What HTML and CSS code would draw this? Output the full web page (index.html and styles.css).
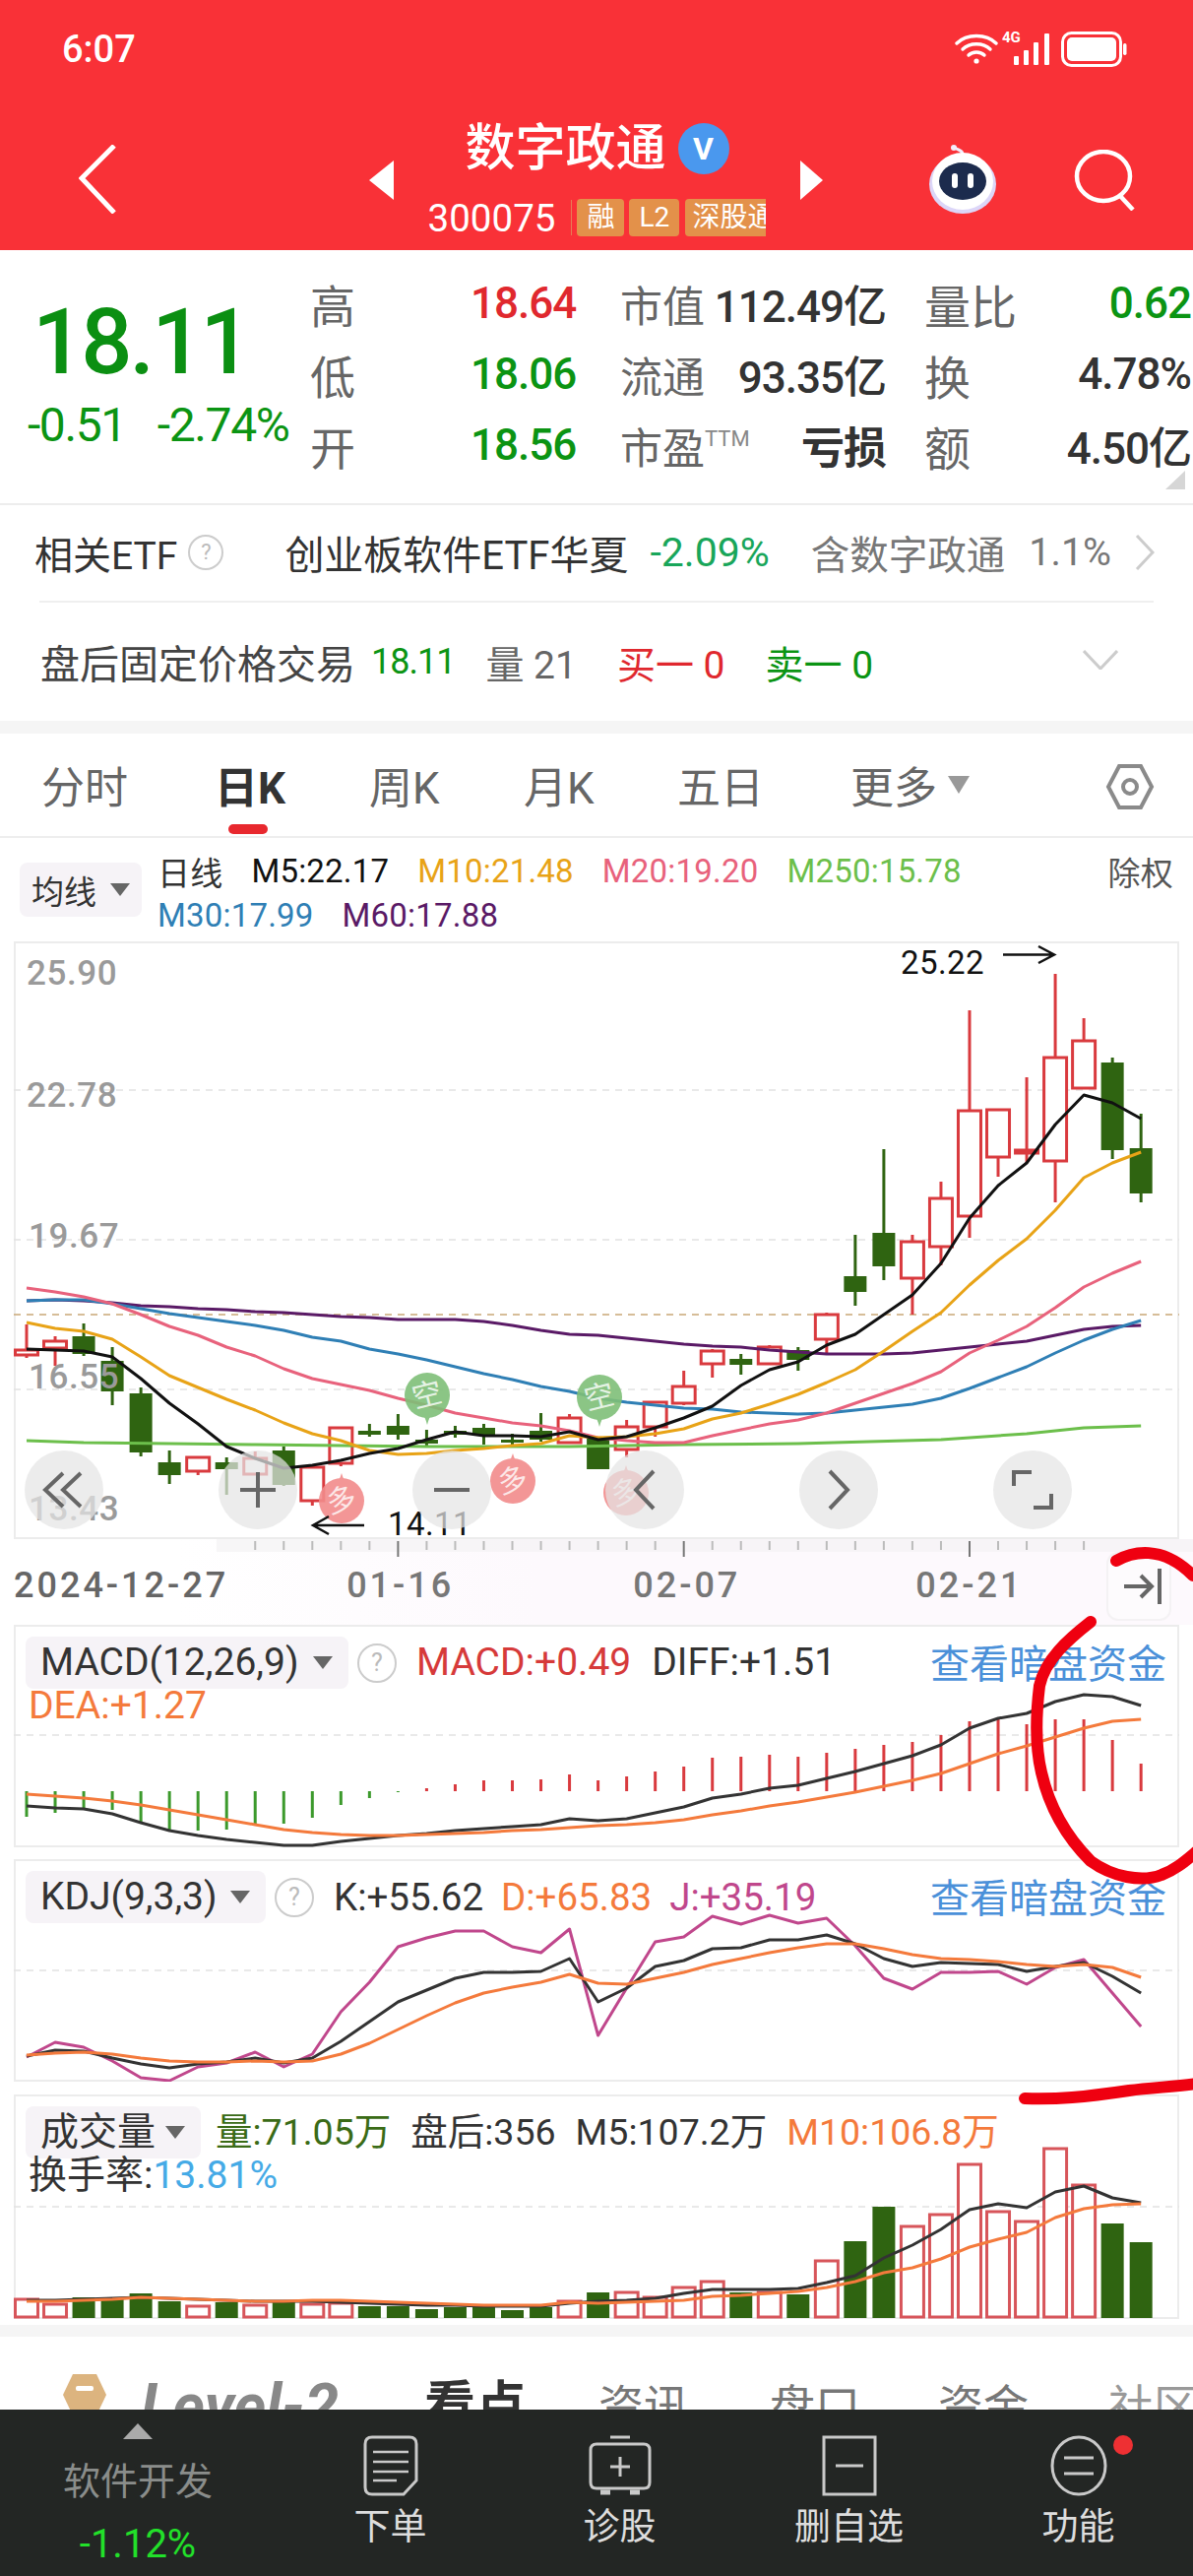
FILE: index.html
```html
<!DOCTYPE html>
<html lang="zh-CN">
<head>
  <meta charset="UTF-8" />
  <meta name="viewport" content="width=device-width, initial-scale=1.0" />
  <title>数字政通 300075</title>
  <link rel="stylesheet" href="styles.css">
</head>
<body>
  <div class="page">
    <!-- 顶部 -->
    <header class="top">
      <div class="status">
        <span class="time">6:07</span>
        <div class="status-icons">
          <svg width="44" height="34" viewBox="0 0 44 34" fill="none" stroke="#fff" stroke-width="3.4" stroke-linecap="round"><path d="M2 11C12 1 32 1 42 11"/><path d="M8 17C15 10 29 10 36 17"/><path d="M14 23C18 19 26 19 30 23"/><circle cx="22" cy="29" r="2.6" fill="#fff" stroke="none"/></svg>
          <div class="signal">
            <span class="net">4G</span>
            <svg width="38" height="34" viewBox="0 0 38 34" fill="#fff"><rect x="0" y="24" width="5" height="9" rx="1"/><rect x="10" y="18" width="5" height="15" rx="1"/><rect x="20" y="10" width="5" height="23" rx="1"/><rect x="31" y="1" width="5" height="32" rx="1"/></svg>
          </div>
          <svg width="68" height="36" viewBox="0 0 68 36"><rect x="1.5" y="1.5" width="59" height="33" rx="9" fill="none" stroke="#fff" stroke-width="3"/><rect x="6" y="6" width="50" height="24" rx="5" fill="#fff"/><rect x="63" y="12" width="3.5" height="12" rx="1.7" fill="#fff"/></svg>
        </div>
      </div>
      <div class="nav">
        <svg class="back" width="38" height="70" viewBox="0 0 38 70" fill="none" stroke="#fff" stroke-width="5"><path d="M36 1 3 34l33 35"/></svg>
        <svg class="tri tri-left" width="25" height="40" viewBox="0 0 25 40" fill="#fff"><path d="M25 0V40L0 20Z"/></svg>
        <div class="stock">
          <div class="stock-name">
            <span>数字政通</span>
            <i class="v-badge">V</i>
          </div>
          <div class="stock-sub">
            <span class="code">300075</span>
            <span class="sep"></span>
            <span class="tag">融</span>
            <span class="tag tag-l2">L2</span>
            <span class="tag tag-cut">深股通</span>
          </div>
        </div>
        <svg class="tri tri-right" width="23" height="40" viewBox="0 0 23 40" fill="#fff"><path d="M0 0V40L23 20Z"/></svg>
        <svg class="robot" width="73" height="70" viewBox="0 0 73 70">
          <path d="M37 10C37 4 30 6 29 2" fill="none" stroke="#f3eefc" stroke-width="3"/>
          <circle cx="28" cy="3" r="3" fill="#f3eefc"/>
          <ellipse cx="37" cy="40" rx="34" ry="30" fill="#dcd6f8"/>
          <ellipse cx="37" cy="37" rx="31" ry="29" fill="#fff"/>
          <ellipse cx="37" cy="37" rx="24" ry="19" fill="#1c2b4d"/>
          <rect x="26" y="29" width="6" height="15" rx="3" fill="#fff"/>
          <rect x="42" y="29" width="6" height="15" rx="3" fill="#fff"/>
        </svg>
        <svg class="search" width="62" height="62" viewBox="0 0 62 62" fill="none" stroke="#fff" stroke-width="4.5"><ellipse cx="30" cy="27" rx="27" ry="25"/><path d="M47 47 60 61"/></svg>
      </div>
    </header>

    <!-- 行情 -->
    <section class="quote">
      <div class="price-box">
        <div class="price">18.11</div>
        <div class="change"><span>-0.51</span><span>-2.74%</span></div>
      </div>
      <div class="quote-grid">
        <span class="lbl">高</span><span class="num red">18.64</span>
        <div class="cell"><span class="lbl">市值</span><span class="num">112.49亿</span></div>
        <div class="cell"><span class="lbl big">量比</span><span class="num green">0.62</span></div>
        <span class="lbl">低</span><span class="num green">18.06</span>
        <div class="cell"><span class="lbl">流通</span><span class="num">93.35亿</span></div>
        <div class="cell"><span class="lbl big">换</span><span class="num">4.78%</span></div>
        <span class="lbl">开</span><span class="num green">18.56</span>
        <div class="cell"><span class="lbl">市盈<sup class="ttm">TTM</sup></span><span class="num bold">亏损</span></div>
        <div class="cell"><span class="lbl big">额</span><span class="num">4.50亿</span></div>
      </div>
      <svg class="corner" width="20" height="19" viewBox="0 0 20 19"><path d="M20 0V19H0Z" fill="#d6d6d6"/></svg>
    </section>

    <section class="etf-row">
      <span class="etf-title">相关ETF</span>
      <i class="help help-sm">?</i>
      <span class="etf-name">创业板软件ETF华夏</span>
      <span class="etf-pct">-2.09%</span>
      <span class="etf-note">含数字政通</span>
      <span class="etf-note etf-share">1.1%</span>
      <svg class="etf-more" width="20" height="36" viewBox="0 0 20 36" fill="none" stroke="#ccc" stroke-width="3"><path d="M2 1 18 18 2 35"/></svg>
    </section>

    <section class="after-row">
      <span class="after-title">盘后固定价格交易</span>
      <span class="green after-price">18.11</span>
      <span class="after-vol">量 21</span>
      <span class="red after-buy">买一 0</span>
      <span class="green after-sell">卖一 0</span>
      <svg class="after-more" width="36" height="20" viewBox="0 0 36 20" fill="none" stroke="#ccc" stroke-width="3"><path d="M1 1 18 19 35 1"/></svg>
    </section>
    <div class="band"></div>

    <nav class="tabs">
      <span>分时</span>
      <span class="tab-on">日K</span>
      <span>周K</span>
      <span>月K</span>
      <span>五日</span>
      <span class="tab-more">更多<i class="caret caret-tab"></i></span>
      <svg class="tab-set" width="50" height="48" viewBox="0 0 50 48" fill="none" stroke="#8a8a8a" stroke-width="4"><path d="M14 3H36L47 24 36 45H14L3 24Z"/><circle cx="25" cy="24" r="7"/></svg>
    </nav>

    <!-- K线 -->
    <div class="ma-legend">
      <div class="chip chip-ma">均线<i class="caret"></i></div>
      <div class="ma-rows">
        <div class="ma-row">
          <span class="ma-day">日线</span>
          <span class="c-m5">M5:22.17</span>
          <span class="c-m10">M10:21.48</span>
          <span class="c-m20">M20:19.20</span>
          <span class="c-m250">M250:15.78</span>
          <span class="ma-right">除权</span>
        </div>
        <div class="ma-row">
          <span class="c-m30">M30:17.99</span>
          <span class="c-m60">M60:17.88</span>
        </div>
      </div>
    </div>

    <div class="chart chart-main">
      <svg id="kline" class="plot" width="1184" height="607" viewBox="14 956 1184 607"></svg>
      <div class="chart-nav">
        <span class="nav-btn"><svg width="46" height="46" viewBox="0 0 46 46" fill="none" stroke="#666" stroke-width="4"><path d="M22 6 4 23l18 17"/><path d="M40 6 22 23l18 17"/></svg></span>
        <span class="nav-btn"><svg width="38" height="38" viewBox="0 0 38 38" fill="none" stroke="#666" stroke-width="4"><path d="M19 1V37M1 19H37"/></svg></span>
        <span class="nav-btn"><svg width="38" height="38" viewBox="0 0 38 38" fill="none" stroke="#666" stroke-width="4"><path d="M1 19H37"/></svg></span>
        <span class="nav-btn"><svg width="24" height="42" viewBox="0 0 24 42" fill="none" stroke="#666" stroke-width="4"><path d="M21 2 3 21l18 19"/></svg></span>
        <span class="nav-btn"><svg width="24" height="42" viewBox="0 0 24 42" fill="none" stroke="#666" stroke-width="4"><path d="M3 2 21 21 3 40"/></svg></span>
        <span class="nav-btn"><svg width="42" height="40" viewBox="0 0 42 40" fill="none" stroke="#666" stroke-width="4"><path d="M2 16V2H20"/><path d="M40 24V38H22"/></svg></span>
      </div>
    </div>

    <div class="axis">
      <svg id="axisTicks" class="ticks" width="1212" height="20" viewBox="0 1563 1212 20"></svg>
      <span class="axis-first">2024-12-27</span>
      <span class="axis-a">01-16</span>
      <span class="axis-b">02-07</span>
      <span class="axis-c">02-21</span>
      <div class="jump">
        <svg width="38" height="36" viewBox="0 0 38 36" fill="none" stroke="#666" stroke-width="4"><path d="M0 18H27M17 7 28 18 17 29"/><path d="M36 0V36"/></svg>
      </div>
    </div>

    <div class="chart panel">
      <svg id="macd" class="plot" width="1184" height="226" viewBox="14 1650 1184 226"></svg>
      <div class="legend">
        <div class="legend-row">
          <div class="chip chip-macd">MACD(12,26,9)<i class="caret"></i></div>
          <i class="help">?</i>
          <span class="red-t">MACD:+0.49</span>
          <span>DIFF:+1.51</span>
          <span class="dark-link">查看暗盘资金</span>
        </div>
        <div class="legend-row2 orange-t">DEA:+1.27</div>
      </div>
    </div>

    <div class="chart panel panel-kdj">
      <svg id="kdj" class="plot" width="1184" height="226" viewBox="14 1888 1184 226"></svg>
      <div class="legend">
        <div class="legend-row">
          <div class="chip chip-kdj">KDJ(9,3,3)<i class="caret"></i></div>
          <i class="help">?</i>
          <span class="kdj-val">K:+55.62</span>
          <span class="kdj-val orange-t">D:+65.83</span>
          <span class="kdj-val pink-t">J:+35.19</span>
          <span class="dark-link">查看暗盘资金</span>
        </div>
      </div>
    </div>

    <div class="chart panel panel-vol">
      <svg id="vol" class="plot" width="1184" height="228" viewBox="14 2127 1184 228"></svg>
      <div class="legend">
        <div class="legend-row">
          <div class="chip chip-vol">成交量<i class="caret"></i></div>
          <span class="vol-val vol-t">量:71.05万</span>
          <span class="vol-val">盘后:356</span>
          <span class="vol-val">M5:107.2万</span>
          <span class="vol-val orange-t">M10:106.8万</span>
        </div>
        <div class="legend-row2">换手率:<span class="blue-t">13.81%</span></div>
      </div>
    </div>

    <div class="band band-low"></div>

    <!-- 被底栏压住的一排 -->
    <div class="sub-tabs">
      <svg class="l2-mark" width="46" height="46" viewBox="0 0 46 46"><path d="M11 2H35L45 23 35 44H11L1 23Z" fill="#dcb47f"/><rect x="14" y="14" width="18" height="5" rx="2" fill="#fff"/></svg>
      <span class="l2-text">Level-2</span>
      <span class="sub-on">看点</span>
      <span class="sub-a">资讯</span>
      <span class="sub-b">盘口</span>
      <span class="sub-c">资金</span>
      <span class="sub-d">社区</span>
    </div>

    <footer class="bottom">
      <div class="bottom-sector">
        <i class="bottom-up"></i>
        <span class="sector-name">软件开发</span>
        <span class="sector-pct">-1.12%</span>
      </div>
      <div class="bottom-item">
        <svg width="56" height="62" viewBox="0 0 56 62" fill="none" stroke="#c9c9c9" stroke-width="3"><path d="M9 2H47Q54 2 54 9V46L41 60H9Q2 60 2 53V9Q2 2 9 2Z"/><path d="M10 17H46M10 27H46M10 37H46M10 46H34" stroke-width="2.6"/></svg>
        <span>下单</span>
      </div>
      <div class="bottom-item">
        <svg width="64" height="62" viewBox="0 0 64 62" fill="none" stroke="#c9c9c9" stroke-width="3"><path d="M22 2H42"/><path d="M8 9H56Q62 9 62 15V48Q62 54 56 54H8Q2 54 2 48V15Q2 9 8 9Z"/><path d="M32 22V42M22 32H42"/><path d="M12 58H22M42 58H52" stroke-width="5"/></svg>
        <span>诊股</span>
      </div>
      <div class="bottom-item">
        <svg width="56" height="62" viewBox="0 0 56 62" fill="none" stroke="#c9c9c9" stroke-width="3"><rect x="2" y="2" width="52" height="58"/><path d="M14 31H42"/></svg>
        <span>删自选</span>
      </div>
      <div class="bottom-item">
        <svg width="58" height="62" viewBox="0 0 58 62" fill="none" stroke="#c9c9c9" stroke-width="3"><ellipse cx="29" cy="31" rx="27" ry="29"/><path d="M14 23H44M14 39H44"/></svg>
        <span>功能</span>
        <i class="red-dot"></i>
      </div>
    </footer>

    <!-- 手写红笔圈注 -->
    <svg class="scribble" width="1212" height="2616" viewBox="0 0 1212 2616" fill="none" stroke="#ef0010" stroke-width="12" stroke-linecap="round">
      <path d="M1134 1585C1150 1576 1180 1568 1212 1600"/>
      <path d="M1108 1647C1085 1665 1062 1685 1056 1712C1052 1745 1052 1775 1058 1800C1066 1835 1084 1866 1108 1890C1130 1906 1160 1912 1180 1904C1194 1899 1204 1890 1216 1880"/>
      <path d="M1041 2131C1075 2132 1100 2130 1147 2123C1170 2120 1195 2119 1216 2116"/>
    </svg>
  </div>
  <script src="chart.js"></script>
</body>
</html>
```

FILE: styles.css
```css
*{box-sizing:border-box;}
html,body{margin:0;padding:0;}
body{font-family:Roboto,"Noto Sans CJK SC",sans-serif;background:#fff;color:#333;}
i{font-style:normal;}
.page{position:relative;width:1212px;height:2616px;overflow:hidden;background:#fff;}

.red{color:#e0282e;}
.green{color:#0b9413;}

/* top */
.top{height:254px;background:#f93137;color:#fff;}
.status{display:flex;align-items:center;justify-content:space-between;height:100px;padding:0 66px 0 63px;}
.time{font-size:38px;font-weight:500;}
.status-icons{display:flex;align-items:center;gap:10px;}
.signal{position:relative;width:44px;height:34px;padding-left:6px;}
.net{position:absolute;left:-6px;top:-4px;font-size:15px;font-weight:700;}
.nav{display:flex;align-items:flex-start;padding:20px 0 0 80px;}
.back{margin-top:27px;}
.tri{margin-top:43px;}
.tri-left{margin-left:257px;}
.stock{width:413px;margin-top:5px;display:flex;flex-direction:column;align-items:center;}
.stock-name{display:flex;align-items:center;gap:12px;font-size:51px;font-weight:500;line-height:52px;}
.v-badge{width:52px;height:52px;border-radius:50%;background:#4a98ee;color:#fff;font-size:32px;font-weight:700;line-height:52px;text-align:center;}
.stock-sub{display:flex;align-items:center;margin-top:25px;height:38px;}
.code{font-size:38.5px;margin-right:16px;}
.sep{width:1px;height:36px;background:#e87b55;margin-right:5px;}
.tag{width:48px;height:38px;line-height:38px;margin-right:5px;font-size:28px;text-align:center;background:#e3914a;border-radius:4px;white-space:nowrap;}
.tag-l2{width:51px;margin-right:6px;}
.tag-cut{width:82px;padding-left:7px;text-align:left;overflow:hidden;margin:0;border-radius:4px 0 0 4px;}
.robot{margin:27px 0 0 105px;}
.search{margin:32px 0 0 77px;}

/* quote */
.quote{position:relative;display:flex;height:259px;border-bottom:2px solid #ededed;}
.price-box{width:315px;}
.price{margin:44px 0 0 33px;font-size:92px;font-weight:500;line-height:100px;color:#0b8f12;letter-spacing:-3px;}
.change{display:flex;gap:32px;margin:11px 0 0 28px;font-size:48px;line-height:46px;color:#0b9413;letter-spacing:-1.4px;white-space:nowrap;}
.quote-grid{display:grid;grid-template-columns:163px 152px 309px 273px;grid-auto-rows:72px;padding-top:18px;align-items:center;}
.lbl{font-size:46px;color:#666;white-space:nowrap;}
.num{font-size:44px;font-weight:500;color:#333;white-space:nowrap;letter-spacing:-1px;}
.num.red{color:#e0282e;}
.num.green{color:#0b9413;}
.cell{display:flex;align-items:center;justify-content:space-between;padding-right:39px;}
.cell:nth-child(4n){padding-right:2px;}
.cell .lbl{font-size:43px;}
.cell .lbl.big{font-size:47px;}
.ttm{font-size:22px;vertical-align:18px;line-height:0;color:#888;}
.bold{font-weight:700;}
.corner{position:absolute;right:8px;bottom:14px;}

/* etf */
.etf-row{position:relative;display:flex;align-items:center;height:99px;margin:0 40px;padding-bottom:2px;border-bottom:2px solid #efefef;white-space:nowrap;}
.etf-title{margin-left:-5px;font-size:39px;color:#333;}
.etf-name{margin-left:62px;font-size:40px;color:#333;}
.etf-pct{margin-left:22px;font-size:41px;color:#19a65a;}
.etf-note{margin-left:42px;font-size:39.5px;color:#777;}
.etf-share{margin-left:24px;}
.etf-more{position:absolute;right:-1px;top:30px;}
.help{display:inline-block;width:40px;height:40px;margin:0 20px 0 9px;border:2px solid #ccc;border-radius:50%;color:#bbb;font-size:25px;line-height:36px;text-align:center;}
.help-sm{width:36px;height:36px;font-size:22px;line-height:32px;margin:0 0 0 11px;}

.after-row{position:relative;height:120px;display:flex;align-items:center;padding:0 0 0 41px;font-size:40px;white-space:nowrap;}
.after-title{color:#444;}
.after-price{margin-left:16px;font-size:36px;letter-spacing:-1px;}
.after-vol{margin-left:31px;color:#666;font-size:39px;}
.after-buy{margin-left:41px;font-size:39px;}
.after-sell{margin-left:41px;font-size:39px;}
.after-more{position:absolute;right:76px;top:48px;}
.band{height:13px;background:#f5f5f5;}

/* tabs */
.tabs{position:relative;display:grid;grid-template-columns:176px 157px 157px 156px 176px auto;align-items:center;height:106px;padding:0 0 0 42px;border-bottom:2px solid #eee;font-size:44px;color:#666;}
.tab-on{position:relative;font-weight:700;color:#333;}
.tab-on:after{content:"";position:absolute;left:14px;top:72px;width:40px;height:10px;border-radius:5px;background:#e8282e;}
.tab-more{white-space:nowrap;}
.caret{display:inline-block;width:0;height:0;margin-left:14px;vertical-align:5px;border-left:9px solid transparent;border-right:9px solid transparent;border-top:12px solid #666;}
.caret-tab{margin-left:11px;vertical-align:10px;border-left-width:11px;border-right-width:11px;border-top:18px solid #999;}
.tab-set{position:absolute;left:1123px;top:30px;}

/* legend of main chart */
.ma-legend{display:flex;height:105px;}
.chip{display:flex;align-items:center;justify-content:space-between;background:#f6f3f7;border-radius:8px;white-space:nowrap;}
.chip-ma{width:124px;height:55px;margin:25px 16px 0 20px;padding:0 12px;font-size:33px;color:#333;}
.ma-rows{flex:1;padding-top:11px;padding-right:20px;}
.ma-row{display:flex;gap:29px;height:45px;align-items:center;font-size:33px;letter-spacing:.2px;}
.ma-day{color:#333;}
.ma-right{margin-left:auto;color:#555;}
.c-m5{color:#111;}
.c-m10{color:#e8a317;}
.c-m20{color:#e8627c;}
.c-m250{color:#6cbf4b;}
.c-m30{color:#2f7fb5;}
.c-m60{color:#5a1a66;}

/* charts */
.chart{position:relative;width:1184px;margin-left:14px;box-shadow:inset 0 0 0 2px #ececec;}
.chart-main{height:607px;}
.plot{position:absolute;left:0;top:0;}
.price-lbl{font-size:35px;font-weight:500;fill:#9a9a9a;letter-spacing:.6px;}
.hl-lbl{font-size:33px;fill:#111;letter-spacing:.4px;}
.mark-txt{font-size:30px;fill:#fff;fill-opacity:.8;font-family:"Noto Sans CJK SC",sans-serif;}
.chart-nav{position:absolute;left:11px;top:517px;width:1064px;display:flex;justify-content:space-between;}
.nav-btn{display:flex;align-items:center;justify-content:center;width:80px;height:80px;border-radius:50%;background:rgba(228,228,228,.72);}

/* x axis */
.axis{position:relative;display:flex;align-items:flex-start;height:87px;padding:25px 0 0 14px;font-size:36px;font-weight:500;line-height:44px;color:#777;letter-spacing:3px;background:linear-gradient(90deg,#fff 15%,#fdf9fd 45%);}
.ticks{position:absolute;left:0;top:0;}
.axis-first{color:#666;}
.axis-a{margin-left:120px;}
.axis-b{margin-left:182px;}
.axis-c{margin-left:178px;}
.jump{position:absolute;right:22px;top:13px;display:flex;align-items:center;justify-content:center;width:66px;height:70px;padding-left:8px;background:#fdfbfd;border:2px solid #f4f2f4;border-radius:12px;}

/* sub panels */
.panel{height:226px;margin-bottom:12px;}
.panel-vol{height:228px;margin-top:13px;margin-bottom:6px;}
.legend{position:relative;padding:12px 13px 0 12px;font-size:39px;line-height:53px;color:#333;white-space:nowrap;}
.legend-row{display:flex;align-items:center;height:53px;}
.legend-row2{height:34px;line-height:34px;padding-left:3px;}
.legend-row>span{margin-right:21px;}
.legend-row>.kdj-val{font-size:38.5px;margin-right:18px;}
.legend-row>.vol-val{font-size:37.5px;margin-right:20px;}
.legend-row>.dark-link{margin:3px 0 0 auto;font-size:40px;color:#4a90d9;}
.chip-macd{width:328px;height:53px;padding:0 16px 0 15px;}
.chip-kdj{width:244px;height:53px;padding:0 16px 0 15px;}
.chip-vol{width:178px;height:53px;padding:0 16px 0 15px;margin-right:15px;}
.chip .caret{margin-left:6px;border-left-width:10px;border-right-width:10px;border-top-width:13px;}
.red-t{color:#d63a3a;}
.orange-t{color:#f47a3c;}
.pink-t{color:#c0478c;}
.blue-t{color:#45aae6;}
.vol-t{color:#3a6b16;}

.band-low{height:12px;}
.sub-tabs{position:relative;height:74px;overflow:hidden;color:#777;font-size:46px;line-height:62px;white-space:nowrap;}
.sub-tabs>*{position:absolute;top:40px;}
.l2-mark{left:63px;top:36px;}
.l2-text{left:143px;font-size:62px;font-style:italic;font-weight:700;color:#888;}
.sub-on{left:431px;font-size:52px;font-weight:700;color:#333;}
.sub-a{left:608px;}
.sub-b{left:782px;}
.sub-c{left:953px;}
.sub-d{left:1126px;color:#999;}

/* bottom bar */
.bottom{display:grid;grid-template-columns:280px repeat(4,233px);height:169px;background:#232624;color:#ddd;}
.bottom-sector{position:relative;display:flex;flex-direction:column;align-items:center;padding-top:14px;}
.bottom-up{width:0;height:0;border-left:15px solid transparent;border-right:15px solid transparent;border-bottom:16px solid #aaa;}
.sector-name{margin-top:19px;font-size:38px;line-height:48px;color:#8a8d8b;}
.sector-pct{margin-top:17px;font-size:40px;line-height:46px;color:#22e02a;}
.bottom-item{position:relative;display:flex;flex-direction:column;align-items:center;padding-top:26px;font-size:37px;line-height:44px;}
.bottom-item span{margin-top:10px;}
.red-dot{position:absolute;left:152px;top:26px;width:20px;height:20px;border-radius:50%;background:#ee3033;}

.scribble{position:absolute;left:0;top:0;pointer-events:none;}
```

FILE: chart.js
```js
/* K线数据，坐标直接取页面像素 */
const X = i => 27 + 29.03 * i;
const RED = '#d93a3e', GREEN = '#2f6411';

/* [色, 实体上, 实体下, 上影, 下影] */
const candles = [
  ['r',1371,1376,1345,1379],['r',1362,1369,1357,1387],['g',1357,1375,1344,1377],['g',1382,1413,1368,1427],
  ['g',1415,1475,1409,1479],['g',1485,1498,1473,1507],['r',1480,1494,1480,1498],['g',1485,1492,1480,1518],
  ['r',1481,1497,1474,1497],['g',1473,1508,1469,1509],['r',1490,1524,1490,1529],['r',1450,1486,1450,1489],
  ['g',1453,1457,1446,1459],['g',1448,1457,1436,1462],['g',1462,1466,1452,1469],['g',1453,1457,1448,1460],
  ['g',1450,1457,1446,1467],['g',1462,1465,1456,1468],['g',1453,1462,1435,1464],['r',1440,1465,1436,1466],
  ['g',1461,1492,1459,1492],['r',1449,1472,1442,1480],['r',1424,1449,1423,1459],['r',1408,1425,1392,1427],
  ['r',1372,1385,1370,1399],['g',1380,1386,1375,1396],['r',1368,1385,1366,1386],['g',1371,1381,1368,1392],
  ['r',1335,1360,1333,1374],['g',1296,1312,1254,1326],['g',1252,1286,1167,1300],['r',1261,1298,1254,1335],
  ['r',1217,1266,1200,1285],['r',1128,1235,1026,1257],['r',1127,1175,1127,1195],['r',1168,1171,1094,1181],
  ['r',1074,1179,989,1221],['r',1057,1105,1034,1105],['g',1079,1168,1074,1177],['g',1166,1212,1131,1221]
];

const m5 = [1370,1371,1372,1378,1400,1425,1446,1469,1481,1491,1488,1483,1476,1471,1462,1454,1458,1458,1459,1454,1462,1459,1450,1440,1428,1407,1391,1383,1366,1355,1335,1315,1283,1237,1204,1181,1142,1112,1120,1136];
const m10 = [1343,1349,1352,1360,1378,1397,1409,1421,1432,1445,1456,1463,1473,1477,1476,1473,1471,1468,1466,1458,1460,1459,1456,1451,1441,1435,1426,1416,1404,1391,1372,1352,1333,1305,1280,1258,1229,1196,1181,1170];
const m20 = [1308,1312,1317,1324,1335,1347,1356,1368,1377,1390,1400,1406,1412,1420,1427,1435,1440,1445,1448,1453,1460,1463,1465,1465,1458,1452,1446,1442,1435,1425,1415,1405,1393,1374,1361,1347,1328,1307,1293,1281];
const m30 = [1321,1320,1320,1324,1329,1334,1338,1342,1346,1351,1358,1362,1370,1375,1381,1388,1395,1401,1408,1413,1420,1424,1427,1430,1431,1434,1435,1436,1435,1432,1429,1426,1420,1410,1399,1388,1374,1361,1350,1341];
const m60 = [1321,1320,1321,1323,1326,1327,1329,1330,1332,1333,1335,1337,1338,1340,1340,1340,1342,1346,1351,1355,1356,1359,1362,1365,1367,1368,1371,1373,1375,1375,1375,1374,1371,1368,1365,1362,1356,1350,1347,1346];
const m250 = [[0,1463],[2,1465],[5,1466],[8,1467],[11,1468],[14,1469],[19,1469],[23,1467],[27,1466],[32,1462],[35,1456],[37,1450],[39,1448]];

const macdBar = [1845,1841,1838,1838,1850,1858,1859,1858,1853,1852,1846,1833,1826,1820,1816,1812,1808,1808,1807,1802,1808,1804,1799,1794,1785,1784,1782,1784,1780,1776,1772,1769,1762,1748,1745,1751,1746,1746,1767,1791];
const diff = [1834,1836,1837,1842,1851,1859,1864,1868,1871,1874,1874,1870,1867,1864,1862,1859,1857,1855,1853,1847,1849,1847,1841,1835,1826,1822,1816,1813,1806,1799,1791,1783,1772,1755,1745,1740,1728,1721,1723,1732];
const dea = [1822,1824,1826,1829,1833,1838,1843,1848,1853,1858,1861,1863,1864,1864,1863,1862,1861,1859,1858,1856,1854,1853,1851,1848,1843,1839,1834,1830,1825,1820,1814,1808,1801,1791,1781,1773,1764,1755,1748,1746];

const kLine = [2088,2082,2083,2090,2096,2100,2096,2094,2090,2095,2090,2073,2053,2033,2021,2009,2003,2003,2002,1989,2033,2019,1997,1991,1979,1978,1970,1970,1965,1974,1989,1997,1993,1994,1995,2002,1997,1993,2007,2024];
const dLine = [2087,2085,2084,2086,2090,2093,2094,2094,2093,2094,2093,2086,2075,2061,2047,2034,2024,2018,2013,2005,2014,2015,2009,2003,1995,1989,1983,1978,1974,1974,1979,1985,1989,1990,1992,1995,1997,1995,1998,2008];
const jLine = [2089,2074,2079,2093,2110,2113,2099,2095,2084,2099,2086,2043,2013,1977,1968,1961,1961,1977,1983,1959,2067,2019,1972,1967,1946,1954,1945,1953,1948,1976,2009,2020,2003,2003,2002,2015,1998,1990,2024,2058];

const volTop = [2335,2340,2333,2333,2329,2337,2342,2338,2341,2337,2340,2339,2342,2342,2345,2343,2343,2346,2343,2337,2328,2328,2333,2323,2317,2328,2328,2330,2296,2276,2241,2261,2249,2198,2246,2256,2182,2219,2258,2277];
const volRed = [0,1,6,8,10,11,19,21,22,23,24,26,28,31,32,33,34,35,36,37];
const volM5 = [2336,2336,2335,2334,2333,2334,2335,2336,2337,2337,2337,2338,2339,2340,2341,2341,2342,2342,2342,2339,2337,2336,2334,2329,2325,2325,2325,2324,2318,2311,2293,2280,2264,2244,2238,2242,2226,2220,2232,2237];
const volM10 = [2337,2337,2336,2335,2333,2334,2335,2336,2337,2337,2336,2336,2337,2338,2339,2340,2341,2341,2341,2338,2339,2338,2337,2336,2332,2331,2329,2327,2323,2317,2308,2303,2294,2282,2274,2267,2252,2243,2239,2238];

function line(ys, color, w) {
  const pts = ys.map((y, i) => Array.isArray(y) ? X(y[0]) + ',' + y[1] : X(i) + ',' + y).join(' ');
  return `<polyline points="${pts}" fill="none" stroke="${color}" stroke-width="${w || 3}" stroke-linejoin="round"/>`;
}
function dash(y, color) {
  return `<line x1="14" x2="1198" y1="${y}" y2="${y}" stroke="${color || '#e2e2e2'}" stroke-width="1.5" stroke-dasharray="7 6"/>`;
}
function box(x, y, w, h, color, hollow) {
  if (hollow) return `<rect x="${x - w / 2}" y="${y}" width="${w}" height="${h}" fill="#fff" stroke="${color}" stroke-width="3"/>`;
  return `<rect x="${x - w / 2}" y="${y}" width="${w}" height="${h}" fill="${color}"/>`;
}

/* 气泡标记：空朝下、多朝上 */
function mark(x, y, txt, color, up) {
  const tip = up ? y - 28 : y + 30;
  const side = up ? y - 13 : y + 13;
  return `<g opacity=".9"><circle cx="${x}" cy="${y}" r="23" fill="${color}"/>` +
    `<path d="M${x - 18} ${side}Q${x - 4} ${side} ${x} ${tip}Q${x + 4} ${side} ${x + 18} ${side}Z" fill="${color}"/></g>` +
    `<text class="mark-txt" x="${x}" y="${y + 10}" text-anchor="middle" transform="rotate(-14 ${x} ${y})">${txt}</text>`;
}

/* 主图 */
let s = dash(1107) + dash(1259) + dash(1411) + dash(1335, '#c9a877');
candles.forEach((c, i) => {
  const x = X(i), col = c[0] === 'r' ? RED : GREEN;
  s += `<line x1="${x}" x2="${x}" y1="${c[3]}" y2="${c[4]}" stroke="${col}" stroke-width="3"/>`;
  s += c[0] === 'r' ? box(x, c[1], 23, c[2] - c[1], col, true) : box(x, c[1], 23, c[2] - c[1], col);
});
s += line(m250, '#6cbf4b') + line(m60, '#5a1a66') + line(m30, '#2f7fb5') + line(m20, '#e8627c') + line(m10, '#e8a317') + line(m5, '#111');
s += mark(434, 1417, '空', '#7fbf78') + mark(609, 1419, '空', '#7fbf78');
s += mark(347, 1524, '多', '#f28b8b', true) + mark(521, 1504, '多', '#f28b8b', true) + mark(636, 1516, '多', '#f28b8b', true);
[['25.90', 27, 1000], ['22.78', 27, 1124], ['19.67', 29, 1267], ['16.55', 29, 1410], ['13.43', 29, 1544]].forEach(p => {
  s += `<text class="price-lbl" x="${p[1]}" y="${p[2]}">${p[0]}</text>`;
});
s += `<text class="hl-lbl" x="915" y="989">25.22</text>`;
s += `<path d="M1019 969.5H1071M1055 961 1071 969.5 1055 978" fill="none" stroke="#111" stroke-width="2.5"/>`;
s += `<text class="hl-lbl" x="394" y="1559">14.11</text>`;
s += `<path d="M370 1549H318M334 1540 318 1549 334 1558" fill="none" stroke="#111" stroke-width="2.5"/>`;
document.getElementById('kline').innerHTML = s;

/* 时间轴刻度 */
let t = '<rect x="220" y="1563" width="992" height="13" fill="#f4f2f4" opacity=".7"/>';
for (let i = 8; i <= 37; i++) {
  const big = i === 13 || i === 23 || i === 33;
  t += `<line x1="${X(i)}" x2="${X(i)}" y1="1565" y2="${big ? 1581 : 1574}" stroke="${big ? '#777' : '#bbb'}" stroke-width="2"/>`;
}
document.getElementById('axisTicks').innerHTML = t;

/* MACD */
s = dash(1762);
macdBar.forEach((y, i) => {
  const col = i < 14 ? '#3c9a2c' : RED, top = Math.min(y, 1819), h = Math.abs(y - 1819);
  s += `<rect x="${X(i) - 1.5}" y="${top}" width="3" height="${h}" fill="${col}"/>`;
});
s += line(diff, '#333') + line(dea, '#f47a3c');
document.getElementById('macd').innerHTML = s;

/* KDJ */
s = dash(2001) + line(jLine, '#c0478c') + line(kLine, '#333') + line(dLine, '#f47a3c');
document.getElementById('kdj').innerHTML = s;

/* 成交量 */
s = dash(2241);
volTop.forEach((y, i) => {
  const hollow = volRed.includes(i);
  s += hollow ? box(X(i), y, 23, 2353 - y, '#d7555a', true) : box(X(i), y, 23, 2354 - y, GREEN);
});
s += line(volM5, '#333') + line(volM10, '#f47a3c');
document.getElementById('vol').innerHTML = s;
```
